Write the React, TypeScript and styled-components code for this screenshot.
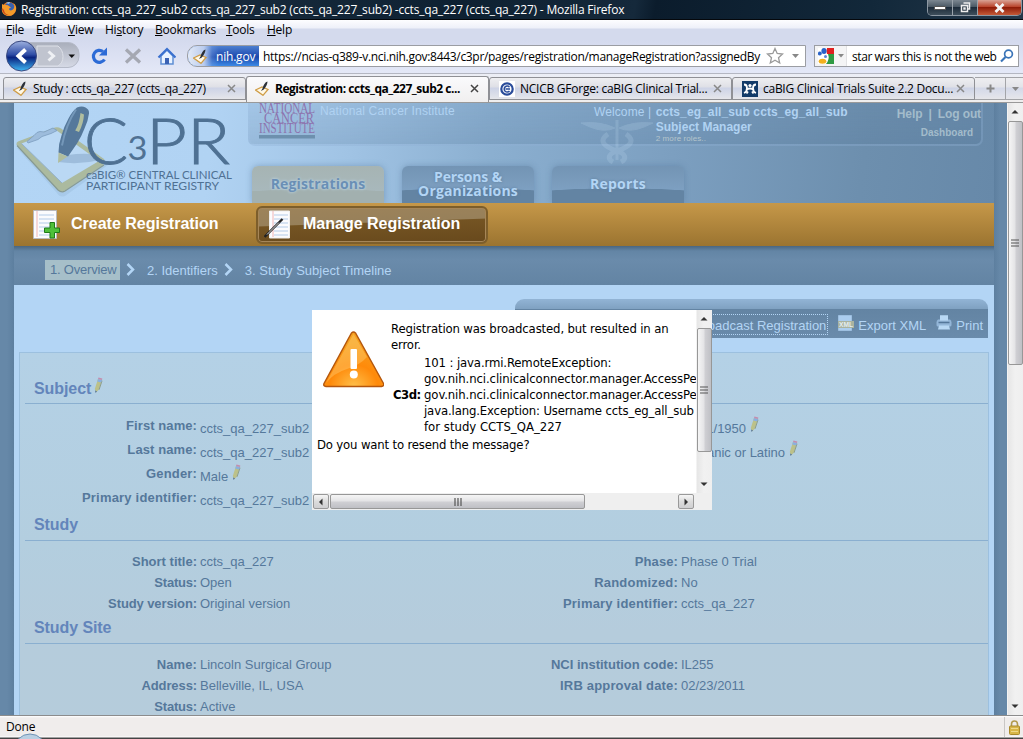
import React from "react";
import styled, { createGlobalStyle, css } from "styled-components";

const Global = createGlobalStyle`
  * { box-sizing: border-box; }
  html, body { margin: 0; padding: 0; overflow: hidden; }
  svg { display: block; flex: none; }
`;

const ui = `"Open Sans", "Noto Sans", sans-serif`;
const arial = `"Liberation Sans", Arial, sans-serif`;

const Window = styled.div`
  position: relative;
  width: 1023px;
  height: 739px;
  overflow: hidden;
  display: flex;
  flex-direction: column;
  font-family: ${ui};
  font-size: 12px;
  color: #000;
  white-space: nowrap;
`;

const Label = styled.span<{ $ls?: number }>`
  letter-spacing: ${(p) => p.$ls ?? 0}px;
`;

/* ---------- window chrome ---------- */

const TitleBar = styled.header`
  flex: none;
  height: 20px;
  display: flex;
  align-items: flex-start;
  background: linear-gradient(100deg, #14202f 0%, #0f2233 18%, #182b3d 20%, #0e2132 45%, #15293b 62%, #0b1c2c 64%, #12283a 85%, #24384a 100%);
  border-bottom: 1px solid #05080c;
  color: #fff;
  padding-left: 1px;
`;

const TitleText = styled.h1`
  margin: 0 0 0 4px;
  flex: 1;
  font-size: 12px;
  line-height: 19px;
  font-weight: 500;
  letter-spacing: -0.2px;
`;

const WindowButtons = styled.div`
  display: flex;
  width: 95px;
  height: 16px;
  margin-right: 1px;
  border: 1px solid #8d98a3;
  border-top: 0;
  border-radius: 0 0 5px 5px;
  overflow: hidden;
`;

const WindowButton = styled.div<{ $close?: boolean }>`
  display: flex;
  align-items: center;
  justify-content: center;
  width: ${(p) => (p.$close ? 43 : 25)}px;
  border-right: ${(p) => (p.$close ? 0 : "1px solid #9aa3ab")};
  background: ${(p) =>
    p.$close
      ? "linear-gradient(#d9a294, #b9442c 45%, #8f1c08 50%, #c45a38)"
      : "linear-gradient(#7c8791, #4b5965 45%, #1d2c3a 50%, #3f4f5c)"};
  flex-grow: ${(p) => (p.$close ? 1 : 0)};
`;

const MenuBar = styled.nav`
  flex: none;
  display: flex;
  height: 20px;
  padding-left: 6px;
  line-height: 20px;
  background: linear-gradient(#fdfdff 0, #eef0f9 8px, #d4daed 9px, #d4daed 100%);
`;

const MenuItem = styled.span<{ $w: number }>`
  width: ${(p) => p.$w}px;
  letter-spacing: -0.25px;
`;

const NavBar = styled.div`
  flex: none;
  display: flex;
  align-items: center;
  height: 34px;
  padding: 0 4px 1px 3px;
  background: linear-gradient(#d4daee, #e4e8f7);
  border-bottom: 1px solid #b4b7c2;
`;

const AddressBar = styled.div`
  display: flex;
  align-items: center;
  width: 619px;
  height: 22px;
  margin-left: 11px;
  border: 1px solid #9b9da3;
  border-radius: 10px 0 0 10px;
  background: #fff;
  overflow: hidden;
`;

const Identity = styled.div`
  display: flex;
  align-items: center;
  width: 71px;
  height: 20px;
  flex: none;
  padding-left: 5px;
  gap: 8px;
  color: #fff;
  background: linear-gradient(90deg, #e3eaf6 0, #b9cbee 16px, rgba(120, 160, 225, 0.4) 24px, transparent 31px),
    linear-gradient(#4d7fd0 0, #2452b4 45%, #1a48ac 55%, #3d8ae6);
`;

const Url = styled.span`
  margin-left: 4px;
  width: 505px;
  letter-spacing: -0.31px;
`;

const SearchBox = styled.div`
  display: flex;
  align-items: center;
  width: 205px;
  height: 22px;
  margin-left: 8px;
  border: 1px solid #9b9da3;
  background: #fff;
`;

const Engine = styled.div`
  display: flex;
  align-items: center;
  gap: 4px;
  width: 32px;
  height: 20px;
  padding-left: 3px;
  background: #f4f4f5;
  border-right: 1px solid #e2e2e4;
`;

const SearchText = styled.span`
  margin-left: 5px;
  width: 148px;
  letter-spacing: -0.42px;
`;

const TabStrip = styled.div`
  flex: none;
  display: flex;
  align-items: flex-end;
  height: 29px;
  padding-left: 3px;
  border-bottom: 1px solid #999;
  background: linear-gradient(#eceef5 0, #e6e8f0 25px, #999 25px, #999 26px, #efeeee 26px);
`;

const BrowserTab = styled.div<{ $active?: boolean; $w: number }>`
  display: flex;
  flex: none;
  align-items: center;
  width: ${(p) => p.$w}px;
  padding: 0 9px 0 9px;
  border: 1px solid #8f9095;
  border-radius: 3px 3px 0 0;
  ${(p) =>
    p.$active
      ? css`
          height: 26px;
          padding-left: 8px;
          padding-bottom: 3px;
          border-bottom: 0;
          font-weight: 700;
          background: linear-gradient(#fafafc, #f0efef);
        `
      : css`
          height: 23px;
          margin-bottom: 2px;
          background: linear-gradient(#eeeef1 0, #dfe0e6 9px, #cdd3e6 10px, #dcdfe9 17px, #e6e6ea);
        `}
`;

const TabText = styled.span<{ $ls: number }>`
  flex: 1;
  min-width: 0;
  margin-left: 5px;
  letter-spacing: ${(p) => p.$ls}px;
`;

const TabTool = styled.div<{ $w: number }>`
  display: flex;
  flex: none;
  align-items: center;
  justify-content: center;
  width: ${(p) => p.$w}px;
  height: 23px;
  margin-bottom: 2px;
  border: 1px solid #a3a4a8;
  border-left: 0;
  background: linear-gradient(#eeeef1 0, #e3e4e9 9px, #d3d8e8 10px, #dfe1ea 17px, #e6e6ea);
`;

/* ---------- web page ---------- */

const Viewport = styled.div`
  flex: none;
  display: flex;
  height: 612px;
  overflow: hidden;
  font-family: ${arial};
`;

const Gutter = styled.div<{ $w: number; $right?: boolean }>`
  flex: none;
  width: ${(p) => p.$w}px;
  background: ${(p) => (p.$right ? "linear-gradient(90deg, #5d7f9f, #6688a8 6px)" : "linear-gradient(90deg, #6688a8 7px, #5d7f9f)")};
`;

const Page = styled.main`
  flex: none;
  width: 980px;
  height: 612px;
  overflow: hidden;
  display: flex;
  flex-direction: column;
  background: #b3d5f5;
`;

const Banner = styled.div`
  flex: none;
  height: 100px;
  display: flex;
  background: linear-gradient(97deg, #b3d5f5 0, #b1d3f3 200px, #a0c3e4 340px, #8bafd0 480px, #7c9fc0 660px, #6d8fae 850px, #6789a9 100%);
`;

const BannerRight = styled.div`
  width: 746px;
  display: flex;
  flex-direction: column;
  justify-content: space-between;
`;

const UserPanel = styled.div`
  display: flex;
  width: 735px;
  height: 43px;
  border: 2px solid rgba(160, 195, 228, 0.28);
  border-top: 0;
  border-radius: 0 0 7px 7px;
  background: linear-gradient(rgba(80, 115, 150, 0.1), rgba(80, 115, 150, 0.22));
  color: #b0d2f2;
  font-size: 12px;
  padding-left: 9px;
`;

const Institute = styled.span`
  margin-left: 4px;
  width: 275px;
  line-height: 16px;
  letter-spacing: 0.14px;
`;

const Welcome = styled.span`
  width: 62px;
  line-height: 18px;
  letter-spacing: 0.12px;
`;

const UserInfo = styled.div`
  width: 242px;
  display: flex;
  flex-direction: column;
  font-weight: 700;
  padding-top: 2px;
  line-height: 15px;
`;

const Roles = styled.small`
  font-size: 8px;
  line-height: 8px;
  font-weight: 400;
  letter-spacing: 0.1px;
  color: #b5c5cc;
`;

const UserLinks = styled.div`
  display: flex;
  flex-direction: column;
  font-weight: 700;
  color: #a3bccb;
  padding-top: 2px;
  line-height: 18px;
`;

const LinkRow = styled.div`
  display: flex;
  gap: 6px;
`;

const Dashboard = styled.span`
  font-size: 10px;
  margin-left: 24px;
  line-height: 19px;
`;

const SectionTabs = styled.div`
  display: flex;
  gap: 18px;
  padding-left: 4px;
`;

const SectionTab = styled.div<{ $active?: boolean }>`
  width: 132px;
  height: 37px;
  display: flex;
  flex-direction: column;
  align-items: center;
  justify-content: center;
  padding-bottom: 2px;
  font-family: ${ui};
  font-weight: 700;
  font-size: 14px;
  line-height: 14px;
  border-radius: 6px 6px 0 0;
  color: ${(p) => (p.$active ? "#6a8fb5" : "#b3d5f5")};
  text-shadow: 0 0 3px ${(p) => (p.$active ? "#c3e0f5" : "#5b7d9d")};
  box-shadow: 0 0 6px rgba(80, 115, 150, 0.45);
  background: ${(p) =>
    p.$active
      ? "radial-gradient(ellipse 130px 14px at 50% 100%, #a2b0af 96%, transparent 100%), linear-gradient(#a6b4b3, #a9bac0)"
      : "radial-gradient(ellipse 130px 15px at 50% 100%, #6384a3 96%, transparent 100%), linear-gradient(#7394b4, #83a6c8)"};
`;

const ActionBar = styled.div`
  flex: none;
  height: 43px;
  display: flex;
  align-items: center;
  background: linear-gradient(#c69849, #9b7430);
  color: #fff;
  font-size: 16px;
  line-height: 18px;
  font-weight: 700;
`;

const Action = styled.div<{ $active?: boolean }>`
  display: flex;
  align-items: center;
  height: 38px;
  & > span { margin-top: -2px; }
  ${(p) =>
    p.$active
      ? css`
          width: 232px;
          padding-left: 6px;
          gap: 11px;
          border: 2px solid #7d5e2b;
          border-radius: 6px;
          box-shadow: inset 0 0 0 1px #a68658;
          background: linear-gradient(178deg, #9d835a 0, #97805a 18px, #745423 19px, #68491c 100%);
        `
      : css`
          width: 242px;
          padding-left: 18px;
          gap: 11px;
        `}
`;

const Steps = styled.div`
  flex: none;
  display: flex;
  align-items: center;
  height: 39px;
  padding: 9px 0 0 31px;
  background: linear-gradient(#4a6680 0, #6385a5 5px, #6a8bab 14px, #6384a3);
  color: #b3d5f5;
  font-size: 13px;
`;

const Step = styled.span<{ $current?: boolean }>`
  ${(p) =>
    p.$current &&
    css`
      width: 75px;
      height: 20px;
      line-height: 20px;
      padding-left: 5px;
      letter-spacing: -0.2px;
      color: #55789b;
      background: #a6bfc9;
    `}
`;

const Chevron = styled.svg`
  margin: 0 12px 2px 6px;
`;

const Toolbar = styled.div`
  flex: none;
  display: flex;
  align-items: center;
  align-self: flex-end;
  width: 473px;
  height: 39px;
  margin: 14px 6px 14px 0;
  padding: 13px 5px 0 0;
  justify-content: flex-end;
  border-radius: 9px 9px 0 0;
  background: linear-gradient(#92b4d5 0, #7fa1c1 10px, #6384a3 10px, #6a8bab);
  color: #b3d5f5;
  font-size: 13px;
`;

const Tool = styled.span<{ $focused?: boolean }>`
  display: flex;
  align-items: center;
  gap: 4px;
  height: 21px;
  margin-left: 10px;
  margin-top: 0;
  & > svg { margin-top: -4px; }
  ${(p) =>
    p.$focused &&
    css`
      border: 1px dotted #b3d5f5;
      margin-left: 0;
      margin-top: -1px;
      padding: 2px 1px 0 0;
    `}
`;

const Panel = styled.section`
  flex: none;
  width: 970px;
  margin-left: 5px;
  padding: 23px 0 0 5px;
  height: 400px;
  border: 1px solid #9cc0df;
  background: linear-gradient(#b4d1e6, #b3cedf 190px, #b5ccdc 280px, #b5ccdb);
  color: #55789b;
  font-size: 13px;
`;

const Heading = styled.h2<{ $pad?: number }>`
  display: flex;
  margin: 0;
  padding: 1px 0 ${(p) => p.$pad ?? 3}px 9px;
  border-bottom: 1px solid #8aafd0;
  font-size: 16px;
  line-height: 24px;
  letter-spacing: -0.08px;
  color: #6385bb;
`;

const Fields = styled.div<{ $row: number; $bottom: number }>`
  display: grid;
  grid-template-columns: 172px 309px 172px 300px;
  grid-auto-rows: ${(p) => p.$row}px;
  line-height: ${(p) => p.$row}px;
  padding: 10px 0 ${(p) => p.$bottom}px 0;
`;

const FieldName = styled.span<{ $ls?: number }>`
  font-weight: 700;
  text-align: right;
  letter-spacing: ${(p) => p.$ls ?? 0}px;
`;

const FieldValue = styled.span<{ $drop?: boolean }>`
  display: flex;
  padding: ${(p) => (p.$drop ? 3 : 0)}px 0 0 3px;
`;

/* ---------- scroll bars ---------- */

const Track = styled.div<{ $h?: number; $w?: number }>`
  flex: none;
  display: flex;
  flex-direction: column;
  align-items: center;
  width: ${(p) => p.$w ?? 16}px;
  height: ${(p) => p.$h ?? 612}px;
  background: linear-gradient(90deg, #fff 0, #e6e6e6 1px, #f1f1f1 50%, #efefef);
`;

const ArrowBox = styled.div<{ $framed?: boolean }>`
  display: flex;
  align-items: center;
  justify-content: center;
  flex: none;
  width: 16px;
  height: ${(p) => (p.$framed ? 15 : 18)}px;
  ${(p) =>
    p.$framed &&
    css`
      border: 1px solid #999;
      border-radius: 2px;
      background: linear-gradient(#f6f6f6, #dcdcdc 50%, #cfcfd1);
    `}
`;

const Thumb = styled.div<{ $len: number; $horizontal?: boolean }>`
  flex: none;
  display: flex;
  align-items: center;
  justify-content: center;
  border: 1px solid #979797;
  border-radius: 2px;
  width: ${(p) => (p.$horizontal ? p.$len : 15)}px;
  height: ${(p) => (p.$horizontal ? 15 : p.$len)}px;
  background: linear-gradient(${(p) => (p.$horizontal ? "180deg" : "90deg")}, #f5f5f5, #e4e4e6 45%, #cfcfd3 55%, #bfc0c5);
`;

const Fill = styled.div`
  flex: 1;
`;

/* ---------- dialog ---------- */

const Dialog = styled.div`
  position: absolute;
  left: 312px;
  top: 310px;
  width: 400px;
  height: 200px;
  display: flex;
  flex-direction: column;
  background: #fff;
  font-family: "DejaVu Sans Condensed", "DejaVu Sans", sans-serif;
  font-stretch: condensed;
  font-size: 13px;
  line-height: 16px;
`;

const DialogMain = styled.div`
  display: flex;
  height: 183px;
`;

const Message = styled.div`
  width: 384px;
  height: 183px;
  padding: 11px 0 0 5px;
`;

const MessageTop = styled.div`
  display: flex;
  height: 116px;
`;

const MessageBody = styled.div`
  margin-left: 7px;
`;

const Line = styled.div<{ $ls: number }>`
  letter-spacing: ${(p) => p.$ls}px;
`;

const ErrorRow = styled.div`
  display: flex;
  align-items: center;
  padding-top: 2px;
`;

const ErrorSource = styled.b`
  width: 33px;
  padding-left: 2px;
  letter-spacing: -0.5px;
`;

const HorizontalBar = styled.div`
  display: flex;
  align-items: center;
  height: 17px;
  padding: 0 18px 0 1px;
  gap: 1px;
  background: #efefef;
`;

/* ---------- status bar ---------- */

const StatusBar = styled.footer`
  flex: none;
  display: flex;
  align-items: center;
  height: 24px;
  padding: 0 3px 1px 6px;
  background: linear-gradient(#8c8c8c 0, #8c8c8c 1px, #fff 1px, #f0edec 3px, #f0edec 21px, #fff 22px, #444 23px);
`;

const LockCell = styled.div`
  margin-left: auto;
  height: 20px;
  padding: 3px 0 0 4px;
  border-left: 1px solid #c9c6c4;
`;

const Orb = styled.svg`
  position: absolute;
  left: 14px;
  top: 733px;
`;

/* ---------- icons ---------- */

const arrowPaths = {
  up: "M0.5 5.5 4 2l3.5 3.5z",
  down: "M0.5 2.5 4 6l3.5-3.5z",
  left: "M5.5 0.5 2 4l3.5 3.5z",
  right: "M2.5 0.5 6 4 2.5 7.5z",
};

const Arrow = ({ dir }: { dir: keyof typeof arrowPaths }) => (
  <svg width="8" height="8" viewBox="0 0 8 8">
    <path d={arrowPaths[dir]} fill="#333" />
  </svg>
);

const Grip = ({ vertical }: { vertical?: boolean }) => (
  <svg width="8" height="8" viewBox="0 0 8 8" stroke="#555" strokeWidth="1.2">
    <path d={vertical ? "M1 0v8M4 0v8M7 0v8" : "M0 1h8M0 4h8M0 7h8"} />
  </svg>
);

const Firefox = () => (
  <svg width="16" height="19" viewBox="0 0 16 19">
    <circle cx="8" cy="9" r="7" fill="#e8761b" />
    <circle cx="8.5" cy="7.5" r="5" fill="#3a62b0" />
    <path d="M1 4c1 1 3 1 4 1 3 0 4 2 5 3-1 0-2 0-2 1 0 2 4 2 5-1 1-2 0-4-1-5 2 1 4 4 3 7s-4 6-7 6c-5 0-8-4-7-8z" fill="#f39a2a" />
    <path d="M1 8c0 5 4 8 8 7-3 0-6-2-6-5z" fill="#c6431a" />
    <path d="M5 3c1-1 3-1 4-1l-1 2z" fill="#8fc3ee" />
  </svg>
);

const NoteIcon = () => (
  <svg width="15" height="15" viewBox="0 0 15 15">
    <path d="M0.500 9 7 6l6 2.500L8 14.300z" fill="#fff8e6" stroke="#cf9c45" strokeWidth="1.3" />
    <path d="M12.500 0.500C10 1 8.500 4 7.500 7.500L6 10l2.800-1.500C11 6 12.500 3 12.500 0.500z" fill="#2b3038" />
  </svg>
);

const CloseX = ({ dark }: { dark?: boolean }) => (
  <svg width="9" height="9" viewBox="0 0 9 9">
    <path d="M1 1l7 7M8 1l-7 7" stroke={dark ? "#444" : "#888"} strokeWidth="1.5" />
  </svg>
);

const NavButtons = () => (
  <svg width="173" height="32" viewBox="0 0 173 32">
    <defs>
      <linearGradient id="back" x1="0" y1="0" x2="0" y2="1">
        <stop offset="0" stopColor="#9fb2e0" />
        <stop offset="0.45" stopColor="#2f4da6" />
        <stop offset="0.55" stopColor="#0a2480" />
        <stop offset="1" stopColor="#3fb8f4" />
      </linearGradient>
      <linearGradient id="key" x1="0" y1="0" x2="0" y2="1">
        <stop offset="0" stopColor="#a9aebb" />
        <stop offset="1" stopColor="#d6dae6" />
      </linearGradient>
    </defs>
    <path d="M14 2.5h51a11 11 0 0 1 11 11v3a11 11 0 0 1-11 11H14z" fill="url(#key)" stroke="#b5bac8" />
    <path d="M34 6h21q5 4 5 10.500t-5 9.500H34z" fill="#c0c4cf" stroke="#dde0e8" />
    <path d="M45.500 11.500l5 4.500-5 4.500" fill="none" stroke="#eef0f4" strokeWidth="3" />
    <path d="M65.500 14.500h6.500l-3.250 3.500z" fill="#111" />
    <circle cx="18.500" cy="16" r="15" fill="url(#back)" stroke="#3b4a80" />
    <path d="M22.500 9.500l-7 6.500 7 6.500" fill="none" stroke="#fff" strokeWidth="4" />
    <path d="M101.500 19.500a6 6 0 1 1-1.500-8" fill="none" stroke="#2c6bd6" strokeWidth="3.2" />
    <path d="M104 7.500v8h-8z" fill="#2c6bd6" />
    <path d="M123 9.500l14 13M137 9.500l-14 13" stroke="#a5a8b2" strokeWidth="3.2" />
    <path d="M158 16v8h12v-8l-6-6z" fill="#e8f2ff" stroke="#5f8fd4" strokeWidth="1.5" />
    <path d="M155.500 17.500l8.500-8.500 8.500 8.500" fill="none" stroke="#3a70cf" strokeWidth="2.2" />
    <path d="M162 18h4v6h-4z" fill="#3a62b4" />
  </svg>
);

const Star = () => (
  <svg width="18" height="18" viewBox="0 0 18 18">
    <path d="M9 1.500l2.200 5 5.300.5-4 3.700 1.200 5.300L9 13.300 4.300 16l1.200-5.300-4-3.700 5.300-.5z" fill="#fff" stroke="#9a9a9a" strokeWidth="1.3" />
  </svg>
);

const Google = () => (
  <svg width="16" height="16" viewBox="0 0 16 16">
    <path d="M0 0h16v16H0z" fill="#fff" />
    <path d="M9 0h7v6H9q-1-3 0-6z" fill="#e02020" />
    <path d="M10 6h6v10h-8q4-5 2-10z" fill="#2f9a42" />
    <ellipse cx="6" cy="3" rx="2.600" ry="3" fill="#2a63c8" />
    <circle cx="1.800" cy="5.500" r="2" fill="#2a63c8" />
    <ellipse cx="4.500" cy="13.200" rx="3.800" ry="2.500" fill="#f2b01e" />
    <circle cx="7.500" cy="8.500" r="1.500" fill="#5a86d6" />
  </svg>
);

const Magnifier = () => (
  <svg width="14" height="14" viewBox="0 0 14 14">
    <circle cx="8.500" cy="5" r="3.900" fill="#fff" stroke="#3a74b8" strokeWidth="1.7" />
    <path d="M5.500 8L1 12.500" stroke="#3a74b8" strokeWidth="2.2" />
  </svg>
);

const GForge = () => (
  <svg width="16" height="16" viewBox="0 0 16 16">
    <path d="M0 0h16v16H0z" fill="#fff" />
    <circle cx="8" cy="8" r="5.700" fill="none" stroke="#2a4c9a" strokeWidth="2.2" />
    <path d="M11 8H6.500M10.500 6.200a3 3 0 1 0 0 3.800" fill="none" stroke="#2a4c9a" strokeWidth="1.5" />
  </svg>
);

const CaBig = () => (
  <svg width="16" height="16" viewBox="0 0 16 16">
    <path d="M0 0h16v16H0z" fill="#123a68" />
    <path d="M2 3.500c2.500 0 3 2 3 3.500s0 4-3 5M14 3.500c-2.500 0-3 2-3 3.500s0 4 3 5" fill="none" stroke="#fff" strokeWidth="1.8" />
    <circle cx="8" cy="4.500" r="1.600" fill="#fff" />
    <path d="M4.500 8.500Q8 6.500 11.500 8.500M6 10.500l-1.500 2M10 10.500l1.500 2" fill="none" stroke="#fff" strokeWidth="1.8" />
  </svg>
);

const PencilSvg = styled.svg<{ $left: number; $top: number }>`
  margin: ${(p) => p.$top}px 0 0 ${(p) => p.$left}px;
`;

const Pencil = ({ left = 3, top = 0 }: { left?: number; top?: number }) => (
  <PencilSvg $left={left} $top={top} width="9" height="17" viewBox="0 0 9 17">
    <path d="M4 2l4 1-3.500 10L2 15.500 0.800 12z" fill="#bcc189" />
    <path d="M6.500 3.500l1.500.3-3 9" stroke="#8d9c86" fill="none" />
    <path d="M4 2l4 1-.8 2.500-4-1z" fill="#8ab0e0" />
    <path d="M4.500 0.500L8.300 1.500 8 3 4 2z" fill="#c48cae" />
    <path d="M1 13.500l2 .8-1.500 1.700z" fill="#57759a" />
  </PencilSvg>
);

const Logo = () => (
  <svg width="234" height="100" viewBox="14 103 234 100">
    <path d="M17 148L58 131l50 34-43 31q-5 2-8-3z" fill="#7f9fbe" opacity="0.2" />
    <path d="M16.500 144.500Q16 142.500 18 141.500L55 127.500Q58 126.500 61 128.500L104 159Q106 162 103 165L65 190.500Q61 193 57.500 189.500z" fill="#abba9f" />
    <path d="M17 145.500L58 190q3.500 3 7 1L104 165" fill="none" stroke="#879a92" strokeWidth="1.2" />
    <path d="M21.500 143.500L56 130 99 161 62 183z" fill="#bad8f4" />
    <path d="M21.500 143.500L62 183" stroke="#93b1cb" strokeWidth="1" />
    <path d="M27 141.500l7-6q3-4 6-4l4 .5 9-4 4 2.500-6 3-9 3-4 3-10 3.500z" fill="#9dbcdc" stroke="#7c9dbf" strokeWidth="0.8" />
    <path d="M58 162l10-7q12-2 24-1l8 6q-20 5-42 2z" fill="#86a7c8" opacity="0.55" />
    <path d="M77 107.500q5-2 8.500 0 4 2 3.500 6-1 8-4.500 15-3 8-7.500 15l-9 13-9.500-4q0-9 3-17 2.500-9 7-17 3.500-7 8.500-11z" fill="#55789b" />
    <path d="M76 109.500q-10 15-14 36" stroke="#7497b9" strokeWidth="2" fill="none" />
    <path d="M80.500 113l3.500 1.500q-.5 9-5 17.500l-3.800-1.500q4-6 5.300-17.500z" fill="#b0bd9e" />
    <path d="M58.500 152.500l9 4L58 163z" fill="#b0bd9e" />
    <g fill="#4f7193" fontFamily="Lato, sans-serif">
      <text x="84" y="163.5" fontSize="63" fontWeight="300" stroke="#4f7193" strokeWidth="0.9" textLength="44" lengthAdjust="spacingAndGlyphs">C</text>
      <text x="127.500" y="159.5" fontSize="33" textLength="20" lengthAdjust="spacingAndGlyphs">3</text>
      <text x="146" y="163.5" fontSize="63" fontWeight="300" stroke="#4f7193" strokeWidth="0.9" textLength="84" lengthAdjust="spacingAndGlyphs">PR</text>
      <text x="86" y="178.5" fontSize="11" textLength="146" lengthAdjust="spacingAndGlyphs">caBIG® CENTRAL CLINICAL</text>
      <text x="86" y="190" fontSize="11" textLength="133" lengthAdjust="spacingAndGlyphs">PARTICIPANT REGISTRY</text>
    </g>
  </svg>
);

const NciLogo = () => (
  <svg width="57" height="38" viewBox="0 0 57 38" fontFamily="Liberation Serif, serif" fontSize="14" fill="#8d72ad">
    <text x="0" y="10" textLength="56" lengthAdjust="spacingAndGlyphs">NATIONAL</text>
    <text x="5" y="20" textLength="50" lengthAdjust="spacingAndGlyphs">CANCER</text>
    <text x="0" y="30" textLength="56" lengthAdjust="spacingAndGlyphs">INSTITUTE</text>
    <path d="M0 32h56v3.500H0z" fill="#6d90ae" />
  </svg>
);

const Caduceus = styled.svg`
  position: absolute;
  left: 578px;
  top: 118px;
  opacity: 0.16;
`;

const Sheet = ({ pen }: { pen?: boolean }) => (
  <svg width="28" height="31" viewBox="0 0 28 31">
    <path d={pen ? "M5.500 2h20v27h-20z" : "M1.500 1.500h23v28h-23z"} fill="#fbfbfd" stroke={pen ? "#eee" : "#b9b9bd"} />
    <path d={pen ? "M10 6h14M10 10h14M10 14h14M10 18h14M10 22h14M10 26h14" : "M7 6h15M7 10h15M7 14h15M7 18h15M7 22h15M7 26h15"} stroke="#b3cbe8" />
    <path d={pen ? "M9 2v26" : "M5 2v26"} stroke="#f0b5b5" />
    {pen ? (
      <>
        <path d="M0.500 28L18.500 10" stroke="#222" strokeWidth="2.4" />
        <path d="M3 25.500L15 13.500" stroke="#ddd" strokeWidth="1" />
      </>
    ) : (
      <path d="M18 13.500h4.500v5.500h5v4.500h-5v5.500H18v-5.500h-5.500V19H18z" fill="#4fc03a" stroke="#1f7a1a" />
    )}
  </svg>
);

const XmlIcon = () => (
  <svg width="16" height="17" viewBox="0 0 16 17">
    <path d="M0.500 0.500h13v15h-13z" fill="#abcdef" stroke="#9dbfe0" />
    <path d="M0 6h16v7H0z" fill="#a9b3a0" />
    <text x="1" y="12" fontSize="7" fontWeight="700" fill="#e4edf0" textLength="14" lengthAdjust="spacingAndGlyphs">XML</text>
  </svg>
);

const Printer = () => (
  <svg width="16" height="16" viewBox="0 0 16 16">
    <path d="M4 0.500h8v6H4z" fill="#b8d8f4" />
    <path d="M2 4.500h12q1.500 1 1.500 3v2.500q0 1.500-1.500 1.500H2Q0.500 11.500 0.500 10V7.500q0-2 1.500-3z" fill="#93b6d8" />
    <path d="M4 0.500h8v5H4z" fill="#b8d8f4" />
    <path d="M2.500 7.500h11" stroke="#54779a" strokeWidth="1.5" />
    <path d="M3 10.500h10l1 4H2z" fill="#b8d8f4" />
  </svg>
);

const Warning = () => (
  <svg width="62" height="58" viewBox="0 0 62 58">
    <defs>
      <radialGradient id="warn" cx="0.5" cy="1" r="0.8">
        <stop offset="0" stopColor="#ffc04a" />
        <stop offset="0.5" stopColor="#ff8a0a" />
        <stop offset="1" stopColor="#f6a01e" />
      </radialGradient>
    </defs>
    <path d="M28.500 2q2-2 4 0l28 50.500q1 2.500-2 3H3Q0 55 1 52.500z" fill="url(#warn)" stroke="#b4560c" strokeWidth="1.4" />
    <path d="M30.500 3L3 52q8-10 21-14 13-4 20-12z" fill="#ffd27a" opacity="0.4" />
    <rect x="27.500" y="18" width="6.5" height="20" rx="1" fill="#fff" />
    <circle cx="30.800" cy="43.500" r="4" fill="#fff" />
  </svg>
);

const Lock = () => (
  <svg width="11" height="15" viewBox="0 0 11 15">
    <path d="M2.500 7V4a3 3 0 0 1 6 0v3" fill="none" stroke="#b19a4e" strokeWidth="1.6" />
    <rect x="0.500" y="6" width="10" height="8.500" rx="1" fill="#d8b648" stroke="#a98a2c" />
    <path d="M2 8.500h7M2 11.500h7" stroke="#efd98a" />
  </svg>
);

/* ---------- content ---------- */

type Field = { name: string; value: string; edit?: boolean; ls?: number };

const subject: Field[] = [
  { name: "First name:", value: "ccts_qa_227_sub2", ls: 0.08 },
  { name: "Birth date:", value: "01/01/1950", edit: true },
  { name: "Last name:", value: "ccts_qa_227_sub2", ls: 0.1 },
  { name: "Ethnicity:", value: "Hispanic or Latino", edit: true },
  { name: "Gender:", value: "Male", edit: true, ls: 0.15 },
  { name: "", value: "" },
  { name: "Primary identifier:", value: "ccts_qa_227_sub2", ls: 0.2 },
];

const study: Field[] = [
  { name: "Short title:", value: "ccts_qa_227" },
  { name: "Phase:", value: "Phase 0 Trial", ls: 0.1 },
  { name: "Status:", value: "Open", ls: -0.2 },
  { name: "Randomized:", value: "No", ls: 0.2 },
  { name: "Study version:", value: "Original version", ls: -0.1 },
  { name: "Primary identifier:", value: "ccts_qa_227", ls: 0.2 },
];

const site: Field[] = [
  { name: "Name:", value: "Lincoln Surgical Group", ls: 0.1 },
  { name: "NCI institution code:", value: "IL255" },
  { name: "Address:", value: "Belleville, IL, USA", ls: -0.1 },
  { name: "IRB approval date:", value: "02/23/2011", ls: 0.17 },
  { name: "Status:", value: "Active", ls: -0.2 },
];

const FieldGrid = ({ items, row, bottom, drop }: { items: Field[]; row: number; bottom: number; drop?: boolean }) => (
  <Fields $row={row} $bottom={bottom}>
    {items.map((f, i) => (
      <React.Fragment key={i}>
        <FieldName $ls={f.ls}>{f.name}</FieldName>
        <FieldValue $drop={drop}>
          {f.value}
          {f.edit && <Pencil left={4} top={-1} />}
        </FieldValue>
      </React.Fragment>
    ))}
  </Fields>
);

const ChevronIcon = () => (
  <Chevron width="9" height="13" viewBox="0 0 9 13">
    <path d="M1.500 1l5.500 5.500L1.500 12" fill="none" stroke="#b3d5f5" strokeWidth="2.5" />
  </Chevron>
);

export default function App() {
  return (
    <Window>
      <Global />
      <TitleBar>
        <Firefox />
        <TitleText>Registration: ccts_qa_227_sub2 ccts_qa_227_sub2 (ccts_qa_227_sub2) -ccts_qa_227 (ccts_qa_227) - Mozilla Firefox</TitleText>
        <WindowButtons>
          <WindowButton>
            <svg width="12" height="6" viewBox="0 0 12 6"><path d="M0.500 1.500h11v3h-11z" fill="#fff" stroke="#555" /></svg>
          </WindowButton>
          <WindowButton>
            <svg width="11" height="11" viewBox="0 0 11 11"><path d="M3.500 1h6v6h-2M1.500 3.500h6v6h-6zM4 6h1v1H4z" fill="none" stroke="#eee" strokeWidth="1.5" /></svg>
          </WindowButton>
          <WindowButton $close>
            <svg width="11" height="10" viewBox="0 0 11 10"><path d="M1.500 1l8 8M9.500 1l-8 8" stroke="#f4f4f4" strokeWidth="2.8" /></svg>
          </WindowButton>
        </WindowButtons>
      </TitleBar>

      <MenuBar>
        <MenuItem $w={30}><u>F</u>ile</MenuItem>
        <MenuItem $w={32}><u>E</u>dit</MenuItem>
        <MenuItem $w={37}><u>V</u>iew</MenuItem>
        <MenuItem $w={50}>Hi<u>s</u>tory</MenuItem>
        <MenuItem $w={71}><u>B</u>ookmarks</MenuItem>
        <MenuItem $w={41}><u>T</u>ools</MenuItem>
        <MenuItem $w={40}><u>H</u>elp</MenuItem>
      </MenuBar>

      <NavBar>
        <NavButtons />
        <AddressBar>
          <Identity>
            <NoteIcon />
            <Label $ls={-0.2}>nih.gov</Label>
          </Identity>
          <Url>https://ncias-q389-v.nci.nih.gov:8443/c3pr/pages/registration/manageRegistration?assignedBy</Url>
          <Star />
          <svg width="21" height="5" viewBox="0 0 21 5"><path d="M8 0h7l-3.500 4z" fill="#888" /></svg>
        </AddressBar>
        <SearchBox>
          <Engine>
            <Google />
            <svg width="7" height="4" viewBox="0 0 7 4"><path d="M0 0h6L3 3.500z" fill="#888" /></svg>
          </Engine>
          <SearchText>star wars this is not the web</SearchText>
          <Magnifier />
        </SearchBox>
      </NavBar>

      <TabStrip>
        <BrowserTab $w={243}>
          <NoteIcon />
          <TabText $ls={-0.35}>Study : ccts_qa_227 (ccts_qa_227)</TabText>
          <CloseX />
        </BrowserTab>
        <BrowserTab $active $w={243}>
          <NoteIcon />
          <TabText $ls={-0.48}>Registration: ccts_qa_227_sub2 c...</TabText>
          <CloseX dark />
        </BrowserTab>
        <BrowserTab $w={243}>
          <GForge />
          <TabText $ls={-0.25}>NCICB GForge: caBIG Clinical Trial...</TabText>
          <CloseX />
        </BrowserTab>
        <BrowserTab $w={243}>
          <CaBig />
          <TabText $ls={-0.27}>caBIG Clinical Trials Suite 2.2 Docu...</TabText>
          <CloseX />
        </BrowserTab>
        <TabTool $w={31}>
          <svg width="9" height="9" viewBox="0 0 9 9"><path d="M4.500 0.500v8M0.500 4.500h8" stroke="#888" strokeWidth="2" /></svg>
        </TabTool>
        <TabTool $w={20}>
          <svg width="7" height="4" viewBox="0 0 7 4"><path d="M0 0h7L3.500 4z" fill="#888" /></svg>
        </TabTool>
      </TabStrip>

      <Viewport>
        <Gutter $w={14} />
        <Page>
          <Banner>
            <Logo />
            <BannerRight>
              <UserPanel>
                <NciLogo />
                <Institute>National Cancer Institute</Institute>
                <Welcome>Welcome |</Welcome>
                <UserInfo>
                  <Label $ls={0.1}>ccts_eg_all_sub ccts_eg_all_sub</Label>
                  <Label>Subject Manager</Label>
                  <Roles>2 more roles..</Roles>
                </UserInfo>
                <UserLinks>
                  <LinkRow>
                    <Label $ls={-0.1}>Help</Label>
                    <Label>|</Label>
                    <Label $ls={-0.1}>Log out</Label>
                  </LinkRow>
                  <Dashboard>Dashboard</Dashboard>
                </UserLinks>
              </UserPanel>
              <SectionTabs>
                <SectionTab $active>
                  <Label $ls={0.15}>Registrations</Label>
                </SectionTab>
                <SectionTab>
                  <Label $ls={-0.15}>Persons &amp;</Label>
                  <Label $ls={0.15}>Organizations</Label>
                </SectionTab>
                <SectionTab>
                  <Label $ls={0.2}>Reports</Label>
                </SectionTab>
              </SectionTabs>
            </BannerRight>
          </Banner>

          <ActionBar>
            <Action>
              <Sheet />
              <Label>Create Registration</Label>
            </Action>
            <Action $active>
              <Sheet pen />
              <Label>Manage Registration</Label>
            </Action>
          </ActionBar>

          <Steps>
            <Step $current>1. Overview</Step>
            <ChevronIcon />
            <Step>2. Identifiers</Step>
            <ChevronIcon />
            <Step>3. Study Subject Timeline</Step>
          </Steps>

          <Toolbar>
            <Tool $focused>Broadcast Registration</Tool>
            <Tool><XmlIcon />Export XML</Tool>
            <Tool><Printer />Print</Tool>
          </Toolbar>

          <Panel>
            <Heading $pad={2}>Subject<Pencil left={3} top={0} /></Heading>
            <FieldGrid items={subject} row={24} bottom={2} drop />
            <Heading>Study</Heading>
            <FieldGrid items={study} row={21} bottom={1} />
            <Heading>Study Site</Heading>
            <FieldGrid items={site} row={21} bottom={0} />
          </Panel>
        </Page>
        <Gutter $w={13} $right />
        <Track>
          <ArrowBox><Arrow dir="up" /></ArrowBox>
          <Thumb $len={244}><Grip /></Thumb>
          <Fill />
          <ArrowBox><Arrow dir="down" /></ArrowBox>
        </Track>
      </Viewport>

      <StatusBar>
        <Label $ls={-0.2}>Done</Label>
        <LockCell><Lock /></LockCell>
      </StatusBar>

      <Orb width="32" height="6" viewBox="0 0 32 6">
        <circle cx="16" cy="17" r="16" fill="#b9cfe2" stroke="#6f93b5" />
      </Orb>

      <Caduceus width="78" height="48" viewBox="0 0 78 48" fill="none" stroke="#d3ecff" strokeWidth="5">
        <path d="M3 5Q22 3 37 10 26 15 12 9zM75 5Q56 3 41 10q11 5 25 -1z" fill="#d3ecff" strokeWidth="1" />
        <path d="M39 2v40" strokeWidth="3" />
        <path d="M30 16c-12 8 0 14 9 17s10 8 4 11M48 16c12 8 0 14-9 17s-10 8-4 11" />
      </Caduceus>

      <Dialog>
        <DialogMain>
          <Message>
            <MessageTop>
              <svg width="67" height="80" viewBox="-6 -10 67 80"><Warning /></svg>
              <MessageBody>
                <Line $ls={-0.14}>Registration was broadcasted, but resulted in an<br />error.</Line>
                <ErrorRow>
                  <ErrorSource>C3d:</ErrorSource>
                  <div>
                    <Line $ls={-0.13}>101 : java.rmi.RemoteException:</Line>
                    <Line $ls={-0.1}>gov.nih.nci.clinicalconnector.manager.AccessPe</Line>
                    <Line $ls={-0.1}>gov.nih.nci.clinicalconnector.manager.AccessPe</Line>
                    <Line $ls={-0.14}>java.lang.Exception: Username ccts_eg_all_sub</Line>
                    <Line $ls={0}>for study CCTS_QA_227</Line>
                  </div>
                </ErrorRow>
              </MessageBody>
            </MessageTop>
            <Line $ls={-0.17}>Do you want to resend the message?</Line>
          </Message>
          <Track $h={183}>
            <ArrowBox><Arrow dir="up" /></ArrowBox>
            <Thumb $len={124}><Grip /></Thumb>
            <Fill />
            <ArrowBox><Arrow dir="down" /></ArrowBox>
          </Track>
        </DialogMain>
        <HorizontalBar>
          <ArrowBox $framed><Arrow dir="left" /></ArrowBox>
          <Thumb $horizontal $len={255}><Grip vertical /></Thumb>
          <Fill />
          <ArrowBox $framed><Arrow dir="right" /></ArrowBox>
        </HorizontalBar>
      </Dialog>
    </Window>
  );
}
